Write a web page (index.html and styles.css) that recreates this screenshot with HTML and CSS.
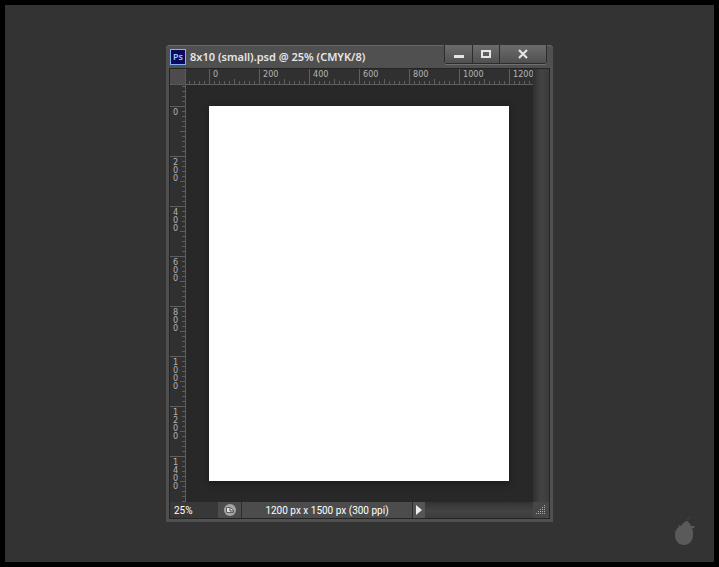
FILE: index.html
```
<!DOCTYPE html>
<html lang="en">
<head>
<meta charset="utf-8">
<title>8x10 (small).psd</title>
<link rel="stylesheet" href="styles.css">
</head>
<body>
<main class="window">
  <header class="titlebar">
    <span class="app-icon">Ps</span>
    <h1 class="title">8x10 (small).psd @ 25% (CMYK/8)</h1>
    <div class="controls">
      <button class="control" type="button" aria-label="Minimize">
        <svg width="12" height="12" viewBox="0 0 12 12"><path fill="#e4e4e4" d="M1 7h10v3H1z"/></svg>
      </button>
      <button class="control" type="button" aria-label="Maximize">
        <svg width="12" height="12" viewBox="0 0 12 12"><path fill="#e4e4e4" fill-rule="evenodd" d="M1 2h10v8H1zM3 4v4h6V4z"/></svg>
      </button>
      <button class="control control-close" type="button" aria-label="Close">
        <svg width="12" height="12" viewBox="0 0 12 12"><path fill="none" stroke="#e4e4e4" stroke-width="2.2" d="M2 2l8 8M10 2l-8 8"/></svg>
      </button>
    </div>
  </header>
  <div class="frame">
    <div class="corner"></div>
    <div class="ruler ruler-x">
      <span>0</span><span>200</span><span>400</span><span>600</span><span>800</span><span>1000</span><span>1200</span>
    </div>
    <div class="scroll-y"></div>
    <div class="ruler ruler-y">
      <span>0</span><span>200</span><span>400</span><span>600</span><span>800</span><span>1000</span><span>1200</span><span>1400</span>
    </div>
    <div class="stage"><div class="paper"></div></div>
    <footer class="status">
      <input class="zoom" type="text" value="25%" aria-label="Zoom level">
      <button class="sync" type="button" aria-label="Share">
        <svg width="12" height="12" viewBox="0 0 12 12"><circle cx="6" cy="6" r="6" fill="#a4a4a4"/><path d="M2.500 8.500v-5h4l3 3v2z" fill="#e0e0e0" stroke="#606060"/><path d="M6 4v3h3.500" fill="none" stroke="#484848"/></svg>
      </button>
      <output class="info">1200 px x 1500 px (300 ppi)</output>
      <button class="more" type="button" aria-label="Status options">
        <svg width="6" height="10" viewBox="0 0 6 10"><path d="M0 0l6 5-6 5z" fill="#eee"/></svg>
      </button>
    </footer>
    <div class="grip">
      <svg width="10" height="10" viewBox="0 0 10 10" fill="#aaa"><path d="M8 0h1v1H8zM6 2h1v1H6zM8 2h1v1H8zM4 4h1v1H4zM6 4h1v1H6zM8 4h1v1H8zM2 6h1v1H2zM4 6h1v1H4zM6 6h1v1H6zM8 6h1v1H8zM0 8h1v1H0zM2 8h1v1H2zM4 8h1v1H4zM6 8h1v1H6zM8 8h1v1H8z"/></svg>
    </div>
  </div>
</main>
<svg class="mark" width="22" height="30" viewBox="0 0 22 30" fill="#5a5a5a"><path d="M12 5c2 0 4 2 5 5h4l-1 2h-2c1 2 1 4 1 7 0 6-4 10-9 10s-9-4-9-10c0-4 1-6 4-8L4 9l3 1c1-2 3-4 5-5z"/><path d="M13 4l3-3" stroke="#444" fill="none"/></svg>
</body>
</html>
```
FILE: styles.css
```
* {
  box-sizing: border-box;
}

body {
  display: flex;
  align-items: center;
  justify-content: center;
  min-height: 100vh;
  margin: 0;
  padding: 40px;
  border: 5px solid #000;
  background: #333;
  font-family: Roboto, "Noto Sans", sans-serif;
  font-size: 10px;
}

button {
  display: flex;
  align-items: center;
  justify-content: center;
  padding: 0;
  border: 0;
}

.window {
  padding: 0 3px 3px;
  border-radius: 4px 4px 0 0;
  background: #505050;
  box-shadow: inset 0 1px #686868;
}

.titlebar {
  display: flex;
  align-items: center;
  height: 23px;
  padding: 0 3px 0 1px;
}

.app-icon {
  width: 16px;
  height: 16px;
  border: 1px solid #7fb2f0;
  background: #0a0a5c;
  color: #9cc8ff;
  font-family: "Noto Sans", sans-serif;
  font-size: 9px;
  font-weight: 600;
  line-height: 14px;
  text-align: center;
}

.title {
  flex: 1;
  margin: 0 0 0 4px;
  color: #e6e6e6;
  font-family: "Noto Sans", sans-serif;
  font-size: 11px;
  font-weight: 600;
  line-height: 16px;
  white-space: nowrap;
}

.controls {
  display: flex;
  align-self: flex-start;
  border: 1px solid #2c2c2c;
  border-top: 0;
  border-radius: 0 0 3px 3px;
  box-shadow: 0 1px #707070;
}

.control {
  width: 28px;
  height: 18px;
  border-right: 1px solid #2c2c2c;
  background: linear-gradient(#6c6c6c, #505050);
}

.control + .control {
  width: 27px;
}

.controls .control-close {
  width: 46px;
  border-right: 0;
}

.frame {
  display: grid;
  grid-template-columns: 16px 1fr 16px;
  grid-template-rows: 16px 1fr 16px;
  border: 1px solid #252525;
  background: #282828;
}

.corner {
  border-right: 1px dotted #666;
  border-bottom: 1px dotted #666;
  background: #4c4c4c;
}

.ruler {
  display: flex;
  background-color: #303030;
  color: #b4b4b4;
  font-family: "DejaVu Sans Condensed", "Noto Sans", sans-serif;
  font-size: 9px;
}

.ruler-x {
  width: 0;
  min-width: 100%;
  padding-left: 27px;
  border-bottom: 1px solid #5e5e5e;
  background-image:
    linear-gradient(90deg, #5e5e5e 1px, transparent 1px),
    linear-gradient(90deg, #5e5e5e 1px, transparent 1px),
    linear-gradient(90deg, #5e5e5e 1px, transparent 1px);
  background-repeat: repeat-x;
  background-position: 23px 100%;
  background-size: 50px 15px, 25px 5px, 5px 3px;
}

.ruler-x span {
  flex: 0 0 50px;
  line-height: 10px;
}

.ruler-x span:last-child {
  flex: none;
}

.ruler-y {
  flex-direction: column;
  height: 0;
  min-height: 100%;
  padding-top: 23px;
  border-right: 1px solid #5e5e5e;
  background-image:
    linear-gradient(#5e5e5e 1px, transparent 1px),
    linear-gradient(#5e5e5e 1px, transparent 1px),
    linear-gradient(#5e5e5e 1px, transparent 1px);
  background-repeat: repeat-y;
  background-position: 100% 21px;
  background-size: 15px 50px, 5px 25px, 3px 5px;
}

.ruler-y span {
  flex: 0 0 50px;
  width: 6px;
  margin-left: 3px;
  line-height: 8px;
  word-break: break-all;
}

.ruler-y span:last-child {
  flex: none;
}

.scroll-y {
  grid-area: 1 / 3 / 3 / 4;
  background: linear-gradient(90deg, #303030, #434343 50%, #3c3c3c);
}

.stage {
  padding: 21px 24px 21px 23px;
}

.paper {
  width: 300px;
  height: 375px;
  background: #fff;
  box-shadow: 0 2px 6px #1a1a1a;
}

.status {
  grid-column: 1 / 3;
  display: flex;
  min-width: 0;
  background: linear-gradient(#333, #444 60%, #3c3c3c);
  color: #fff;
}

.zoom {
  width: 48px;
  padding: 0 0 0 4px;
  border: 0;
  background: #383838;
  color: inherit;
  font: inherit;
}

.sync {
  width: 24px;
  border-right: 1px solid #2c2c2c;
  background: #4c4c4c;
}

.info {
  flex: 0 0 170px;
  background: #4c4c4c;
  line-height: 17px;
  text-align: center;
  white-space: nowrap;
}

.more {
  width: 13px;
  border-left: 1px solid #2c2c2c;
  background: #555;
}

.grip {
  display: flex;
  align-items: center;
  justify-content: center;
  background: #474747;
}

.mark {
  position: absolute;
  right: 23px;
  bottom: 21px;
}
```
